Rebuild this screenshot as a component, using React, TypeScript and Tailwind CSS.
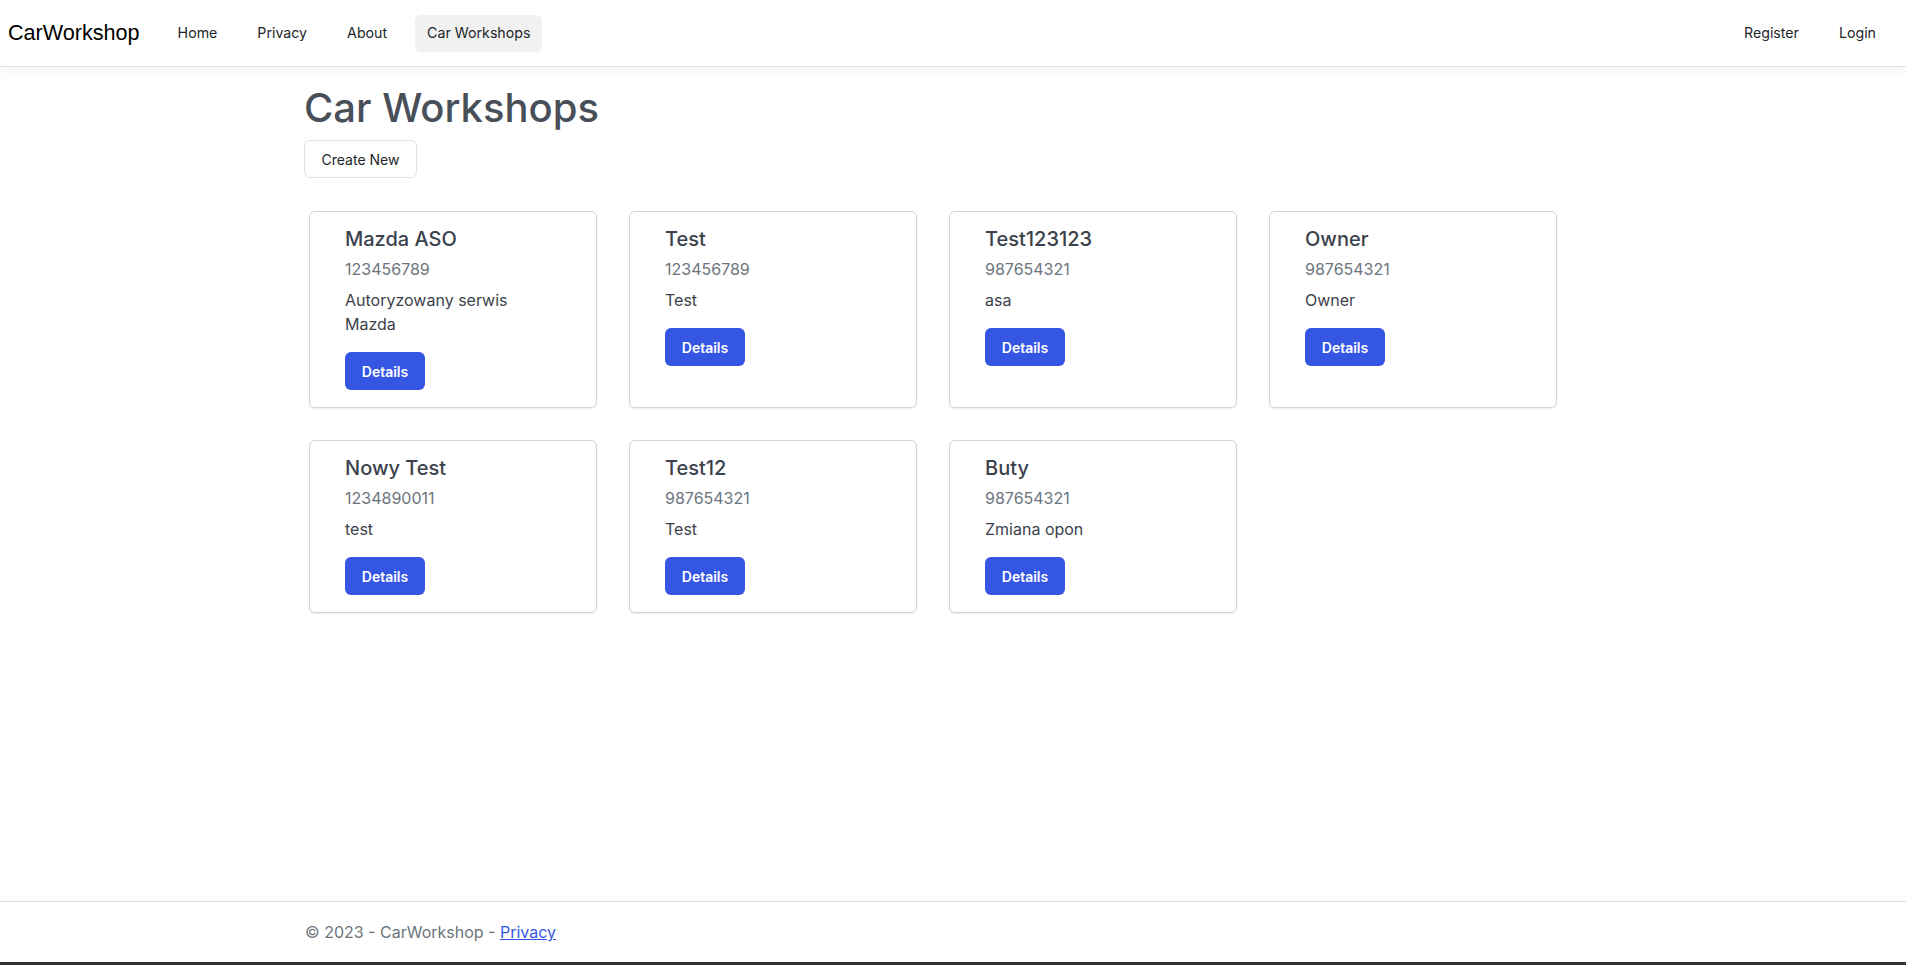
import React from "react";

type Shop = { name: string; phone: string; desc: string };

const shops: Shop[] = [
  { name: "Mazda ASO", phone: "123456789", desc: "Autoryzowany serwis Mazda" },
  { name: "Test", phone: "123456789", desc: "Test" },
  { name: "Test123123", phone: "987654321", desc: "asa" },
  { name: "Owner", phone: "987654321", desc: "Owner" },
  { name: "Nowy Test", phone: "1234890011", desc: "test" },
  { name: "Test12", phone: "987654321", desc: "Test" },
  { name: "Buty", phone: "987654321", desc: "Zmiana opon" },
];

function Card({ shop }: { shop: Shop }) {
  return (
    <div className="w-[288px] rounded-md border border-[#d3d3d3] bg-white pl-[35px] pr-[41px] pt-[15px] pb-[17px] shadow-[0_1px_2px_rgba(0,0,0,0.08)]">
      <div className="mb-[6px] text-[20px] font-medium leading-6 text-[#3b424c]">{shop.name}</div>
      <div className="mb-[7px] text-[16px] leading-6 text-[#6c757d]">{shop.phone}</div>
      <div className="mb-[16px] text-[16px] leading-6 text-[#3b424c]">{shop.desc}</div>
      <a className="inline-flex h-[38px] w-[80px] items-center justify-center rounded-md bg-[#3456e3] text-[14px] font-semibold text-white">
        Details
      </a>
    </div>
  );
}

export default function App() {
  return (
    <div className="flex h-[965px] flex-col overflow-hidden bg-white font-['Inter',sans-serif]">
      <header className="relative z-10 flex h-[67px] shrink-0 items-center border-b border-[#dedede] bg-white pl-2 pr-[18px] shadow-[0_6px_12px_rgba(0,0,0,0.04)]">
        <span className="font-['Liberation_Sans',Arial,sans-serif] text-[21.6px] text-black">CarWorkshop</span>
        <nav className="ml-[26px] flex items-center gap-4 text-[14.2px] text-[#212529]">
          <a className="px-3">Home</a>
          <a className="px-3">Privacy</a>
          <a className="px-3">About</a>
          <a className="flex h-[37px] items-center rounded-md bg-[#f1f1f1] px-3">Car Workshops</a>
        </nav>
        <div className="ml-auto flex items-center gap-4 text-[14.2px] text-[#212529]">
          <a className="px-3">Register</a>
          <a className="px-3">Login</a>
        </div>
      </header>

      <main className="flex-1 pl-[304px]">
        <h1 className="mt-[17px] mb-2 text-[40px] font-medium leading-[48px] text-[#484f58]">Car Workshops</h1>
        <button className="flex h-[38px] w-[113px] items-center justify-center rounded-md border border-[#dee2e6] bg-white text-[14px] text-[#212529]">
          Create New
        </button>
        <div className="mt-[33px] ml-[5px] flex w-[1248px] flex-wrap gap-8">
          {shops.map((s) => (
            <Card key={s.name} shop={s} />
          ))}
        </div>
      </main>

      <footer className="flex h-[61px] shrink-0 items-center border-t border-[#dedede] pl-[305px] text-[16px] text-[#6c757d]">
        <span>
          © 2023 - CarWorkshop - <a className="text-[#3456e3] underline">Privacy</a>
        </span>
      </footer>
      <div className="h-[3px] shrink-0 bg-[#343434]" />
    </div>
  );
}
